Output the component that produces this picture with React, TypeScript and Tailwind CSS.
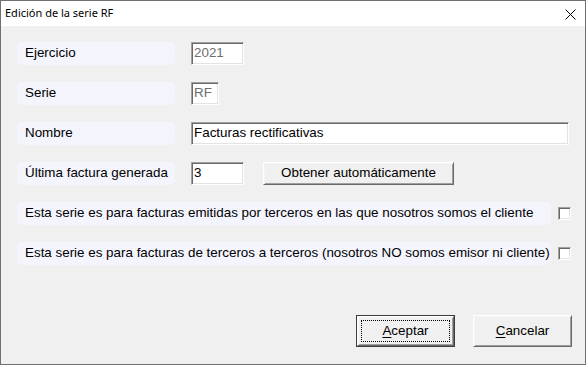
import React from "react";

const sunken =
  "border border-t-[#a0a0a0] border-l-[#a0a0a0] border-b-white border-r-white shadow-[inset_1px_1px_0_#696969,inset_-1px_-1px_0_#e3e3e3]";
const raised =
  "border border-t-white border-l-white border-b-[#696969] border-r-[#696969] shadow-[inset_1px_1px_0_#f4f4f4,inset_-1px_-1px_0_#a0a0a0] bg-[#f0f0f0]";

function Label({ children, w }: { children: React.ReactNode; w: string }) {
  return (
    <div className={`${w} h-[23px] rounded-[5px] bg-[#f4f4fc] flex items-center pl-[8px] whitespace-nowrap`}>
      {children}
    </div>
  );
}

function Input({ w, value, disabled }: { w: string; value: string; disabled?: boolean }) {
  return (
    <div
      className={`${w} h-[23px] ${sunken} bg-white flex items-center pl-[2px] ${
        disabled ? "text-[#6d6d6d]" : "text-black"
      }`}
    >
      {value}
    </div>
  );
}

function Check() {
  return <div className={`w-[13px] h-[13px] bg-white ${sunken}`} />;
}

export default function App() {
  return (
    <div
      className="w-[586px] h-[365px] border border-[#707070] bg-[#f0f0f0] flex flex-col text-[13.4px] text-black overflow-hidden"
      style={{ fontFamily: '"Liberation Sans", Arial, sans-serif' }}
    >
      <div className="h-[25px] bg-white flex items-center justify-between pl-[4px] pr-[9px] shrink-0">
        <span className="text-[11px] text-black" style={{ fontFamily: '"Noto Sans", "Open Sans", sans-serif' }}>
          Edición de la serie RF
        </span>
        <svg width="11" height="11" viewBox="0 0 11 11" className="mt-[1px]">
          <path d="M0.5 0.5 L10.5 10.5 M10.5 0.5 L0.5 10.5" stroke="#000" strokeWidth="1" fill="none" />
        </svg>
      </div>
      <div className="flex flex-col pl-[16px] pt-[16px]">
        <div className="flex items-start gap-[16px]">
          <Label w="w-[158px]">Ejercicio</Label>
          <Input w="w-[53px]" value="2021" disabled />
        </div>
        <div className="flex items-start gap-[16px] mt-[17px]">
          <Label w="w-[158px]">Serie</Label>
          <Input w="w-[28px]" value="RF" disabled />
        </div>
        <div className="flex items-start gap-[16px] mt-[17px]">
          <Label w="w-[158px]">Nombre</Label>
          <Input w="w-[378px]" value="Facturas rectificativas" />
        </div>
        <div className="flex items-start mt-[17px]">
          <Label w="w-[158px]">Última factura generada</Label>
          <div className="ml-[16px]">
            <Input w="w-[53px]" value="3" />
          </div>
          <button className={`ml-[19px] w-[191px] h-[23px] ${raised} flex items-center justify-center`}>
            Obtener automáticamente
          </button>
        </div>
        <div className="flex items-center gap-[7px] mt-[17px]">
          <Label w="w-[534px]">Esta serie es para facturas emitidas por terceros en las que nosotros somos el cliente</Label>
          <Check />
        </div>
        <div className="flex items-center gap-[7px] mt-[17px]">
          <Label w="w-[534px]">Esta serie es para facturas de terceros a terceros (nosotros NO somos emisor ni cliente)</Label>
          <Check />
        </div>
        <div className="flex justify-end gap-[18px] mt-[50px] pr-[13px]">
          <div className="w-[99px] h-[32px] border border-[#3c3c3c] flex">
            <div className={`flex-1 ${raised} p-[3px] flex`}>
              <div className="flex-1 border border-dotted border-black flex items-center justify-center">
                <span>
                  <span className="underline underline-offset-2">A</span>ceptar
                </span>
              </div>
            </div>
          </div>
          <div className={`w-[99px] h-[32px] ${raised} flex items-center justify-center`}>
            <span>
              <span className="underline underline-offset-2">C</span>ancelar
            </span>
          </div>
        </div>
      </div>
    </div>
  );
}
